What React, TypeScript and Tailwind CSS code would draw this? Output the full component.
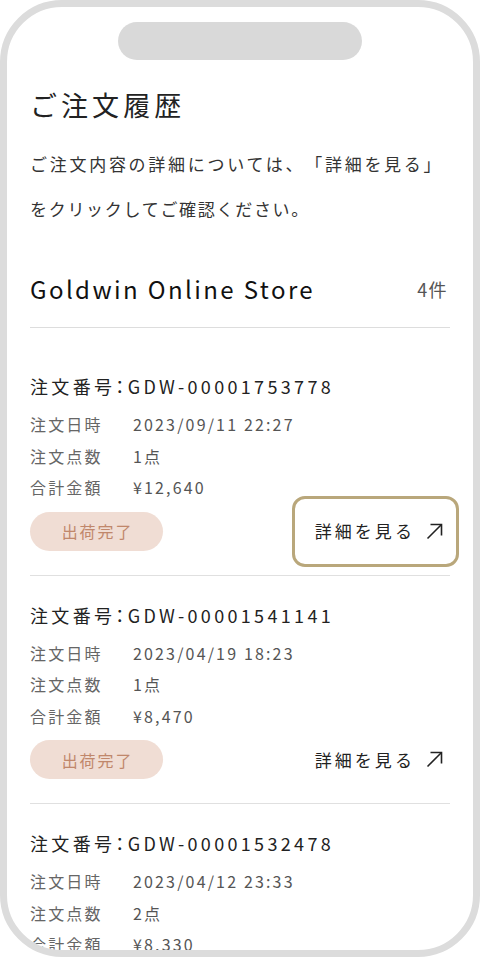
import React from "react";

type Order = {
  no: string;
  date: string;
  qty: string;
  total: string;
  focused?: boolean;
};

const orders: Order[] = [
  { no: "GDW-00001753778", date: "2023/09/11 22:27", qty: "1点", total: "¥12,640", focused: true },
  { no: "GDW-00001541141", date: "2023/04/19 18:23", qty: "1点", total: "¥8,470" },
  { no: "GDW-00001532478", date: "2023/04/12 23:33", qty: "2点", total: "¥8,330" },
];

function ArrowIcon() {
  return (
    <svg width="17" height="17" viewBox="0 0 17 17" fill="none" stroke="currentColor" strokeWidth="1.6">
      <path d="M1.5 15.5 15.5 1.5" />
      <path d="M4.5 1.5h11v11" />
    </svg>
  );
}

function OrderItem({ order, first }: { order: Order; first?: boolean }) {
  return (
    <div className={`border-b border-[#e0e0e0] pb-[24px] ${first ? "pt-[44px]" : "pt-[25px]"}`}>
      <p className="text-[18px] leading-[28px] tracking-[0.185em] text-[#222]">
        注文番号<span className="[font-feature-settings:'palt']">：</span>
        {order.no}
      </p>
      <dl className="mt-[9px] text-[16px] leading-[31.5px] tracking-[0.135em]">
        <div className="flex">
          <dt className="w-[103px] text-[#666]">注文日時</dt>
          <dd className="text-[#555]">{order.date}</dd>
        </div>
        <div className="flex">
          <dt className="w-[103px] text-[#666]">注文点数</dt>
          <dd className="text-[#555]">{order.qty}</dd>
        </div>
        <div className="flex">
          <dt className="w-[103px] text-[#666]">合計金額</dt>
          <dd className="text-[#555]">{order.total}</dd>
        </div>
      </dl>
      <div className="mt-[8px] flex items-center justify-between">
        <span className="flex h-[39px] w-[133px] items-center justify-center rounded-full bg-[#f0ddd4] pl-[2px] text-[16px] tracking-[0.12em] text-[#c0876b]">
          出荷完了
        </span>
        <button className="relative mr-[7px] flex h-[39px] items-center gap-[11px] text-[17px] tracking-[0.18em] text-[#222]">
          {order.focused && (
            <span className="pointer-events-none absolute -bottom-[16px] -left-[23px] -right-[16px] -top-[16px] rounded-[13px] border-[3px] border-[#b9a77b]" />
          )}
          詳細を見る
          <ArrowIcon />
        </button>
      </div>
    </div>
  );
}

export default function App() {
  return (
    <div
      className="h-[960px] w-[480px] bg-white [text-spacing-trim:space-all]"
      style={{ fontFamily: '"Noto Sans CJK JP", "Noto Sans", sans-serif' }}
    >
      <div className="relative h-[957px] overflow-hidden rounded-[62px] border-[7px] border-[#dcdcdc] bg-white">
        <div className="mx-auto mt-[15px] h-[38px] w-[244px] rounded-full bg-[#d9d9d9]" />
        <div className="px-[23px]">
          <h1 className="mt-[27px] text-[27px] leading-[36px] tracking-[0.15em] text-[#222]">
            ご注文履歴
          </h1>
          <p className="mt-[18px] text-[17px] leading-[45px] text-[#333]">
            <span className="block tracking-[0.16em]">ご注文内容の詳細については、「詳細を見る」</span>
            <span className="block tracking-[0.1em]">をクリックしてご確認ください。</span>
          </p>
          <div className="mt-[40px] flex items-center justify-between border-b border-[#dddddd] pb-[20px]">
            <h2 className="text-[24px] leading-[36px] tracking-[0.1em] text-[#111]">
              Goldwin Online Store
            </h2>
            <span className="pr-[2px] text-[18px] tracking-[0.08em] text-[#555]">4件</span>
          </div>
          {orders.map((o, i) => (
            <OrderItem key={o.no} order={o} first={i === 0} />
          ))}
        </div>
      </div>
    </div>
  );
}
